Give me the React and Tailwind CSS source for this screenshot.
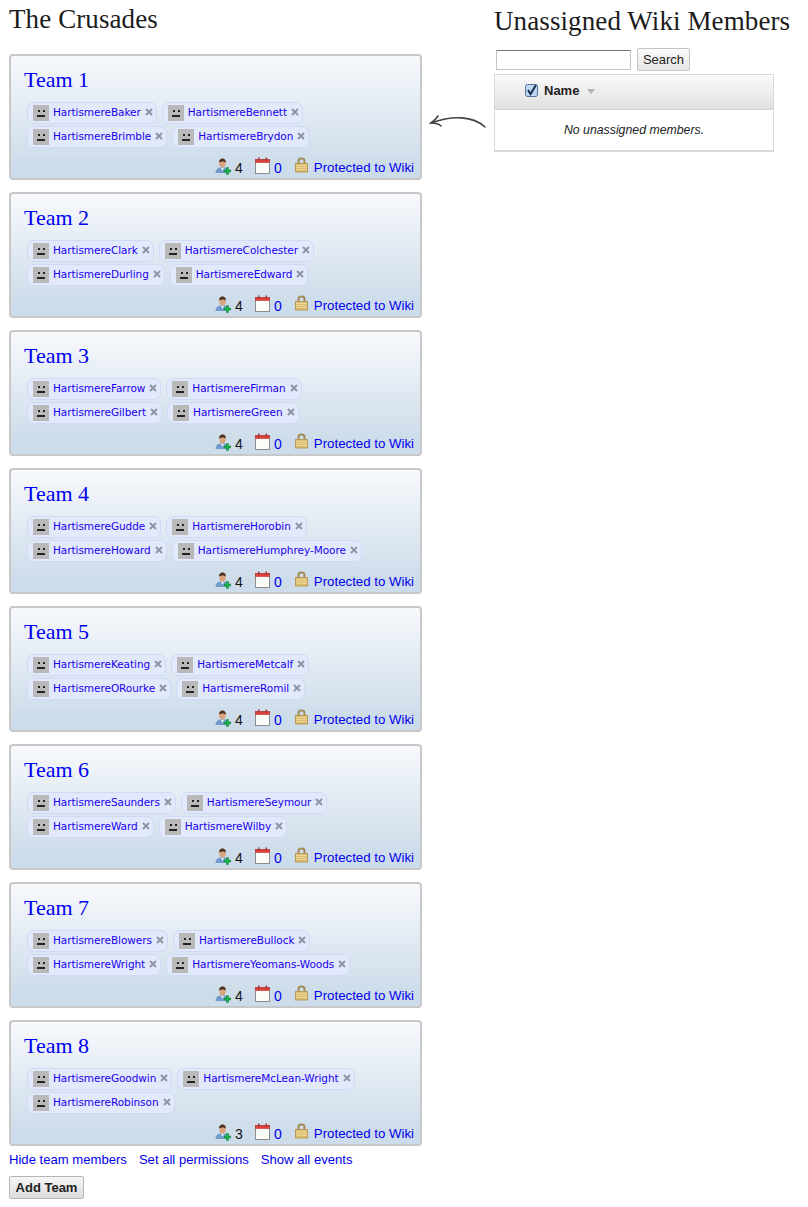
import React from 'react'

const TEAMS = [
  { name: 'Team 1', count: 4, members: ['Baker', 'Bennett', 'Brimble', 'Brydon'] },
  { name: 'Team 2', count: 4, members: ['Clark', 'Colchester', 'Durling', 'Edward'] },
  { name: 'Team 3', count: 4, members: ['Farrow', 'Firman', 'Gilbert', 'Green'] },
  { name: 'Team 4', count: 4, members: ['Gudde', 'Horobin', 'Howard', 'Humphrey-Moore'] },
  { name: 'Team 5', count: 4, members: ['Keating', 'Metcalf', 'ORourke', 'Romil'] },
  { name: 'Team 6', count: 4, members: ['Saunders', 'Seymour', 'Ward', 'Wilby'] },
  { name: 'Team 7', count: 4, members: ['Blowers', 'Bullock', 'Wright', 'Yeomans-Woods'] },
  { name: 'Team 8', count: 3, members: ['Goodwin', 'McLean-Wright', 'Robinson'] },
]

export default function App() {
  return (
    <div className="flex items-start pl-[9px] bg-white font-['Liberation_Sans',sans-serif] text-[#222]">
      <div className="w-[413px] shrink-0">
        <Heading>The Crusades</Heading>
        <div className="flex flex-col gap-3 mt-[15px]">
          {TEAMS.map((team) => (
            <TeamCard key={team.name} team={team} />
          ))}
        </div>
        <div className="flex gap-3 mt-[6px] h-[16px] items-center text-[13.1px] text-[#0000ee]">
          <a>Hide team members</a>
          <a>Set all permissions</a>
          <a>Show all events</a>
        </div>
        <button className="block mt-[8px] w-[75px] h-[23px] rounded-[2px] border border-[#b5b5b5] bg-gradient-to-b from-[#f6f6f6] to-[#dcdcdc] text-[13px] font-bold text-[#222]">
          Add Team
        </button>
      </div>

      <div className="w-[72px] shrink-0 pt-[113px] pl-[7px]">
        <Arrow />
      </div>

      <div className="w-[280px] shrink-0">
        <h2 className="whitespace-nowrap pt-px h-[40px] font-['Liberation_Serif',serif] text-[27px] tracking-[0.1px] leading-[40px] text-[#1c1c1c]">
          Unassigned Wiki Members
        </h2>
        <div className="flex items-center gap-[6px] ml-[2px] mt-[8px] h-[23px]">
          <input className="w-[135px] h-[20px] border border-[#c4c4c4] border-t-[#777] bg-white" />
          <button className="w-[53px] h-[23px] rounded-[2px] border border-[#c4c4c4] bg-gradient-to-b from-[#fbfbfb] to-[#e6e6e6] text-[13px] text-[#222]">
            Search
          </button>
        </div>
        <div className="mt-[3px] border border-[#dadada] border-b-2">
          <div className="flex items-center h-[35px] pl-[30px] pb-[3px] border-b border-[#d4d4d4] bg-gradient-to-b from-[#fafafa] to-[#e1e1e1]">
            <CheckBox />
            <span className="ml-[6px] text-[13px] font-bold text-[#222]">Name</span>
            <span className="ml-[8px] mt-[2px] w-0 h-0 border-x-[4px] border-x-transparent border-t-[5px] border-t-[#b4b4b4]" />
          </div>
          <div className="h-[40px] flex items-center justify-center text-[12.3px] italic text-[#222]">
            No unassigned members.
          </div>
        </div>
      </div>
    </div>
  )
}

function Heading({ children }) {
  return (
    <h1 className="font-['Liberation_Serif',serif] text-[27px] tracking-[0.1px] leading-[39px] text-[#1c1c1c]">
      {children}
    </h1>
  )
}

function TeamCard({ team }) {
  return (
    <div className="h-[126px] rounded-[4px] border-2 border-[#c8c8c8] bg-gradient-to-b from-[#f7f9fc] to-[#cddcea] to-90% pt-[10px]">
      <a className="block pl-[13px] h-[28px] font-['Liberation_Serif',serif] text-[22px] leading-[28px] text-[#0000ee]">
        {team.name}
      </a>
      <div className="flex flex-wrap gap-x-[5px] gap-y-[2px] pl-4 pr-1 mt-[8px] h-[46px] content-start">
        {team.members.map((m) => (
          <MemberChip key={m} name={`Hartismere${m}`} />
        ))}
      </div>
      <div className="flex items-center justify-end h-[20px] mt-[10px] pr-[6px] text-[13.25px] leading-[20px]">
        <UserAddIcon />
        <span className="ml-[4px] w-[7px] text-[14px] text-[#111]">{team.count}</span>
        <CalendarIcon className="ml-[13px]" />
        <a className="ml-[4px] text-[14px] text-[#0000ee]">0</a>
        <LockIcon className="ml-[13px]" />
        <a className="ml-[6px] text-[#0000ee] whitespace-nowrap">Protected to Wiki</a>
      </div>
    </div>
  )
}

function MemberChip({ name }) {
  return (
    <div className="flex items-center h-[22px] pl-[5px] pr-[3px] rounded-[7px] border border-[#d0daf6] bg-[#e2e9fb]">
      <Face />
      <a className="ml-[4px] font-['DejaVu_Sans',sans-serif] text-[10.5px] tracking-[-0.05px] text-[#1a00ee] whitespace-nowrap">
        {name}
      </a>
      <svg className="ml-[4px] mb-[2px]" width="8" height="8" viewBox="0 0 8 8">
        <path d="M1 1 L7 7 M7 1 L1 7" stroke="#8f95a3" strokeWidth="2" />
      </svg>
    </div>
  )
}

function Face() {
  return (
    <svg className="shrink-0" width="16" height="16" viewBox="0 0 16 16">
      <rect width="16" height="16" fill="#b9b9b9" />
      <rect x="5" y="5" width="2" height="2" fill="#222" />
      <rect x="10" y="5" width="2" height="2" fill="#222" />
      <rect x="4" y="10" width="8" height="2" fill="#222" />
    </svg>
  )
}

function UserAddIcon() {
  return (
    <svg width="16" height="18" viewBox="0 0 16 18" className="mb-[4px]">
      <path d="M0.500 16 C0.500 12 3 11 5 10.500 L10 10.500 C12 11 13 12 13 16 Z" fill="#6f9ccb" />
      <path d="M6 11 L7.500 14 L9 11 Z" fill="#e8eef5" />
      <ellipse cx="7.500" cy="6" rx="3.200" ry="4.500" fill="#d9a47e" />
      <path d="M4 5.500 C3.800 0.500 11 0 11 5.500 C9.500 4 6 4 4 5.500 Z" fill="#4a3324" />
      <path d="M11.500 10.500 h2 v2.500 h2.500 v2 h-2.500 v2.500 h-2 v-2.500 h-2.500 v-2 h2.500 Z" fill="#19b24b" stroke="#0f7d34" strokeWidth="0.5" />
    </svg>
  )
}

function CalendarIcon({ className }) {
  return (
    <svg width="15" height="17" viewBox="0 0 15 17" className={`${className} mb-[5px]`}>
      <rect x="0.500" y="2.500" width="14" height="14" fill="#fbfbf8" stroke="#8d8d8d" />
      <rect x="0.500" y="2.500" width="14" height="3" fill="#e0403c" stroke="#b83430" strokeWidth="0.6" />
      <rect x="3" y="0.500" width="1.500" height="3.500" fill="#a33" />
      <rect x="10.500" y="0.500" width="1.500" height="3.500" fill="#a33" />
    </svg>
  )
}

function LockIcon({ className }) {
  return (
    <svg width="13" height="16" viewBox="0 0 13 16" className={`${className} mb-[7px]`}>
      <path d="M3.500 7 V4 C3.500 0.800 9.500 0.800 9.500 4 V7" fill="none" stroke="#a08c58" strokeWidth="2" />
      <rect x="0.500" y="6.500" width="12" height="8.500" fill="#dcbc6e" stroke="#b39a58" />
      <path d="M1 8.500 H12 M1 10.500 H12 M1 12.500 H12" stroke="#f0dca0" strokeWidth="0.800" />
    </svg>
  )
}

function CheckBox() {
  return (
    <svg width="13" height="13" viewBox="0 0 13 13" className="shrink-0">
      <rect x="0.500" y="0.500" width="12" height="12" rx="2" fill="#bcd6f3" stroke="#54709c" />
      <path d="M3 6 L5.500 10 L11 1" fill="none" stroke="#1b2c4a" strokeWidth="2" />
    </svg>
  )
}

function Arrow() {
  return (
    <svg width="58" height="20" viewBox="0 0 58 20" fill="none" stroke="#444" strokeWidth="1.600" strokeLinecap="round">
      <path d="M56 14 C44 3 24 2 2 10" />
      <path d="M9 3 C7 6 5 8 2 10 C6 10 10 11 12 13" />
    </svg>
  )
}
